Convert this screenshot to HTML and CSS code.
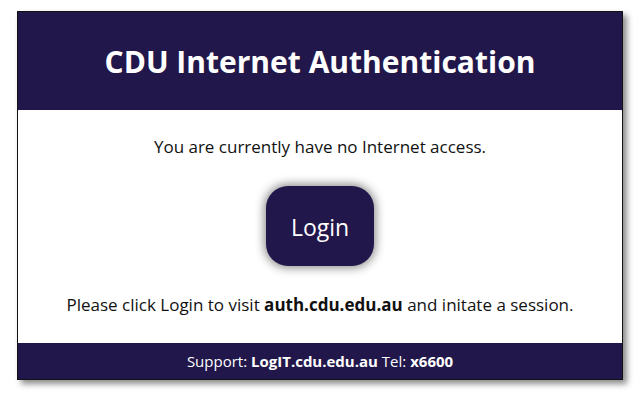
FILE: index.html
```html
<!DOCTYPE html>
<html lang="en">
<head>
  <meta charset="UTF-8">
  <title>CDU Internet Authentication</title>
  <link rel="stylesheet" href="styles.css">
</head>
<body>
  <div class="box">
    <div class="header">CDU Internet Authentication</div>
    <div class="content">
      <p class="msg">You are currently have no Internet access.</p>
      <a class="login" href="#">Login</a>
      <p class="msg">Please click Login to visit <b>auth.cdu.edu.au</b> and initate a session.</p>
    </div>
    <div class="footer"><span>Support: <b>LogIT.cdu.edu.au</b> Tel: <b>x6600</b></span></div>
  </div>
</body>
</html>
```

FILE: styles.css
```css
body {
  margin: 0;
  padding: 11px 17px;
  background: white;
  font-family: "Open Sans", "Noto Sans", sans-serif;
}
.box {
  width: 604px;
  border: 1px solid #111;
  box-shadow: 4px 4px 6px rgba(0,0,0,0.45);
  display: flex;
  flex-direction: column;
}
.header {
  background: #22174a;
  color: white;
  height: 98px;
  display: flex;
  justify-content: center;
  align-items: center;
  font-size: 30px;
  font-weight: bold;
}
.content {
  height: 233px;
  display: flex;
  flex-direction: column;
  align-items: center;
  justify-content: space-between;
  padding: 25px 0 27px;
  box-sizing: border-box;
}
.msg {
  margin: 0;
  font-size: 17px;
  color: #111;
}
.login {
  width: 108px;
  height: 80px;
  border-radius: 22px;
  background: #22174a;
  color: white;
  text-decoration: none;
  font-size: 23px;
  padding-top: 3px;
  box-sizing: border-box;
  display: flex;
  justify-content: center;
  align-items: center;
  box-shadow: 0 0 10px 2px rgba(0,0,0,0.45);
}
.footer {
  background: #22174a;
  color: white;
  height: 36px;
  display: flex;
  justify-content: center;
  align-items: center;
  font-size: 15px;
}
```
